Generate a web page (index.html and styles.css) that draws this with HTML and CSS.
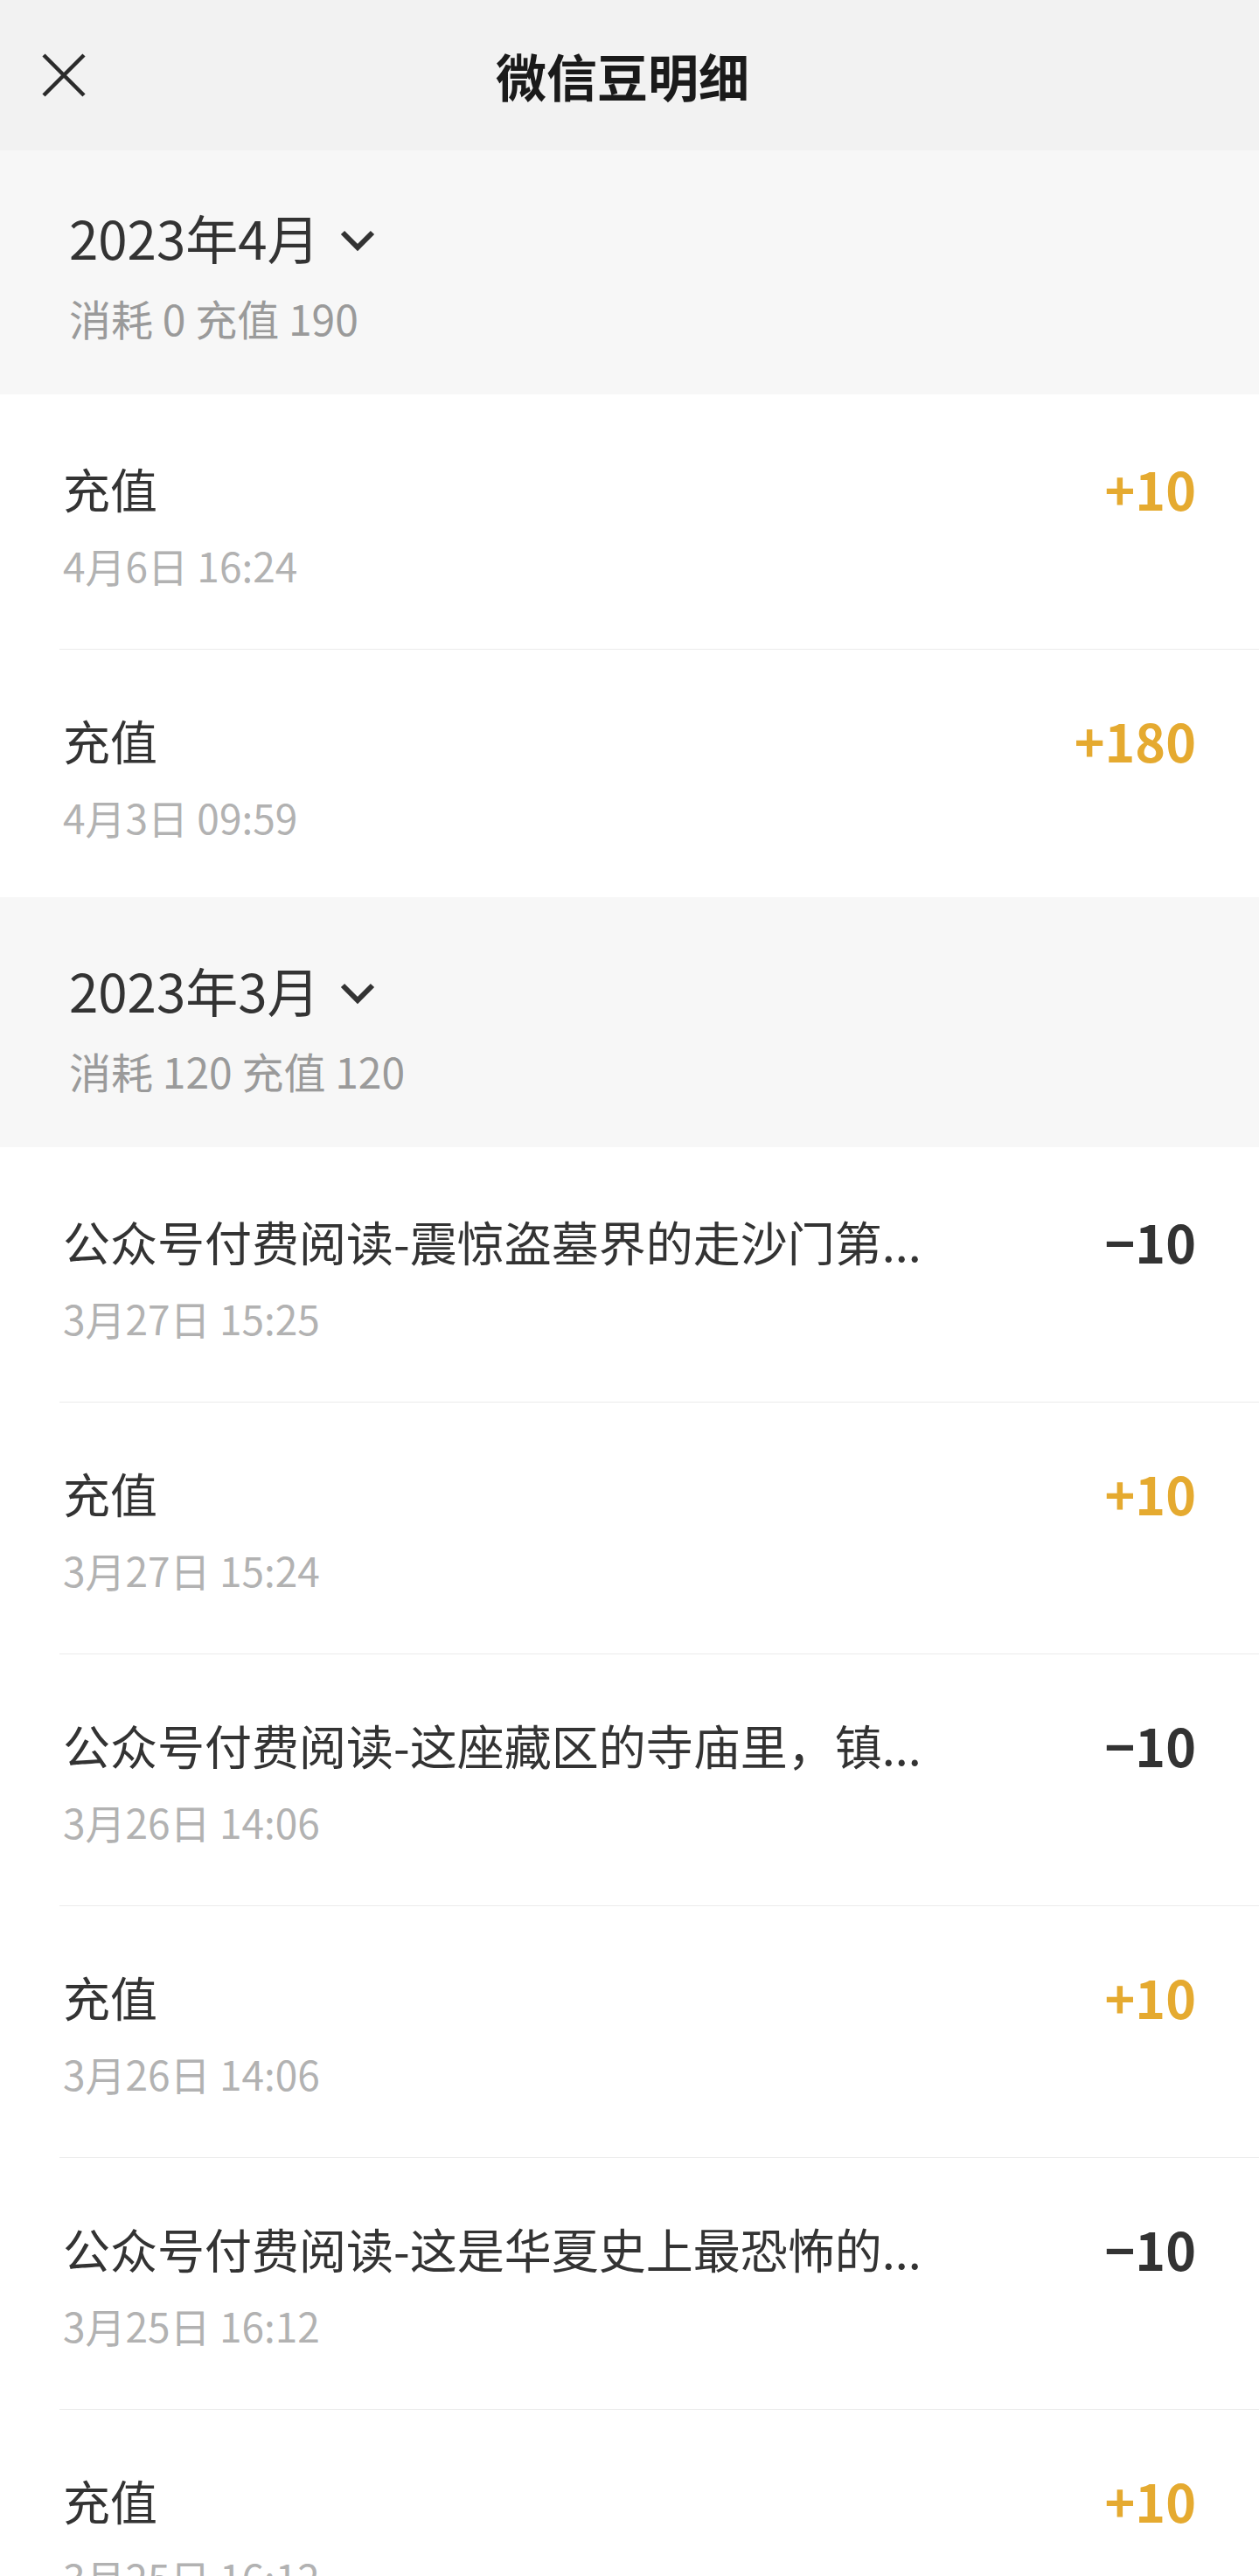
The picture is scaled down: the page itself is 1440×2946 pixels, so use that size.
FILE: index.html
```html
<!DOCTYPE html>
<html lang="zh-CN">
<head>
	<meta charset="UTF-8">
	<title>微信豆明细</title>
	<link rel="stylesheet" href="styles.css">
</head>
<body>
	<div class="page">
		<div class="nav">
			<a href="javascript:;" class="close">
				<svg width="50" height="50" viewBox="0 0 50 50">
					<path d="M2 2L48 48M48 2L2 48" stroke="#2b2b2b" stroke-width="4.5" fill="none"/>
				</svg>
			</a>
			<h1 class="nav-title">微信豆明细</h1>
		</div>

		<div class="month first">
			<div class="month-title">2023年4月
				<svg class="arrow-down" width="40" height="25" viewBox="0 0 40 25">
					<polyline points="3,3 20,20 37,3" stroke="#333" stroke-width="6" fill="none"/>
				</svg>
			</div>
			<p class="month-sum">消耗 0 充值 190</p>
		</div>
		<ul class="list">
			<li class="item">
				<div class="info">
					<p class="name">充值</p>
					<p class="time">4月6日 16:24</p>
				</div>
				<span class="amount plus">+10</span>
			</li>
			<li class="item">
				<div class="info">
					<p class="name">充值</p>
					<p class="time">4月3日 09:59</p>
				</div>
				<span class="amount plus">+180</span>
			</li>
		</ul>

		<div class="month">
			<div class="month-title">2023年3月
				<svg class="arrow-down" width="40" height="25" viewBox="0 0 40 25">
					<polyline points="3,3 20,20 37,3" stroke="#333" stroke-width="6" fill="none"/>
				</svg>
			</div>
			<p class="month-sum">消耗 120 充值 120</p>
		</div>
		<ul class="list">
			<li class="item">
				<div class="info">
					<p class="name">公众号付费阅读-震惊盗墓界的走沙门第...</p>
					<p class="time">3月27日 15:25</p>
				</div>
				<span class="amount">−10</span>
			</li>
			<li class="item">
				<div class="info">
					<p class="name">充值</p>
					<p class="time">3月27日 15:24</p>
				</div>
				<span class="amount plus">+10</span>
			</li>
			<li class="item">
				<div class="info">
					<p class="name">公众号付费阅读-这座藏区的寺庙里，镇...</p>
					<p class="time">3月26日 14:06</p>
				</div>
				<span class="amount">−10</span>
			</li>
			<li class="item">
				<div class="info">
					<p class="name">充值</p>
					<p class="time">3月26日 14:06</p>
				</div>
				<span class="amount plus">+10</span>
			</li>
			<li class="item">
				<div class="info">
					<p class="name">公众号付费阅读-这是华夏史上最恐怖的...</p>
					<p class="time">3月25日 16:12</p>
				</div>
				<span class="amount">−10</span>
			</li>
			<li class="item">
				<div class="info">
					<p class="name">充值</p>
					<p class="time">3月25日 16:12</p>
				</div>
				<span class="amount plus">+10</span>
			</li>
		</ul>
	</div>
</body>
</html>
```

FILE: styles.css
```css
*{
	margin: 0;
	padding: 0;
}

body{
	font-family: "Noto Sans CJK SC", sans-serif;
	background: #fff;
}

.page{
	height: 100vh;
	overflow: hidden;
}

/* 顶部导航 */
.nav{
	display: grid;
	grid-template-columns: 144px 1fr 160px;
	align-items: center;
	height: 172px;
	background: #f2f2f2;
}

.close{
	display: block;
	width: 50px;
	height: 50px;
	margin-left: 48px;
}

.close svg{ display: block; }

.nav-title{
	text-align: center;
	font-size: 58px;
	line-height: 80px;
	font-weight: 700;
	color: #1a1a1a;
}

/* 月份 */
.month{
	background: #f7f7f7;
	padding: 66px 0 58px 79px;
}

.month.first{
	padding-top: 59px;
}

.month-title{
	display: flex;
	align-items: center;
	font-size: 60px;
	line-height: 80px;
	color: #333;
}

.arrow-down{
	margin: 9px 0 0 23px;
}

.month-sum{
	margin-top: 22px;
	font-size: 48px;
	line-height: 60px;
	color: #9a9a9a;
}

/* 明细列表 */
.list{
	list-style: none;
}

.item{
	display: flex;
	justify-content: space-between;
	align-items: flex-start;
	margin-left: 68px;
	padding: 66px 72px 66px 4px;
	border-top: 1px solid #ebebeb;
}

.item:first-child{
	border-top: 0;
	padding-top: 70px;
}

.item:last-child{
	padding-bottom: 62px;
}

.name{
	font-size: 54px;
	line-height: 76px;
	color: #333;
	white-space: nowrap;
}

.time{
	margin-top: 19px;
	font-size: 46px;
	line-height: 60px;
	color: #b2b2b2;
}

.amount{
	font-size: 59px;
	line-height: 76px;
	font-weight: 700;
	color: #333;
}

.amount.plus{
	color: #e5aa30;
}
```
